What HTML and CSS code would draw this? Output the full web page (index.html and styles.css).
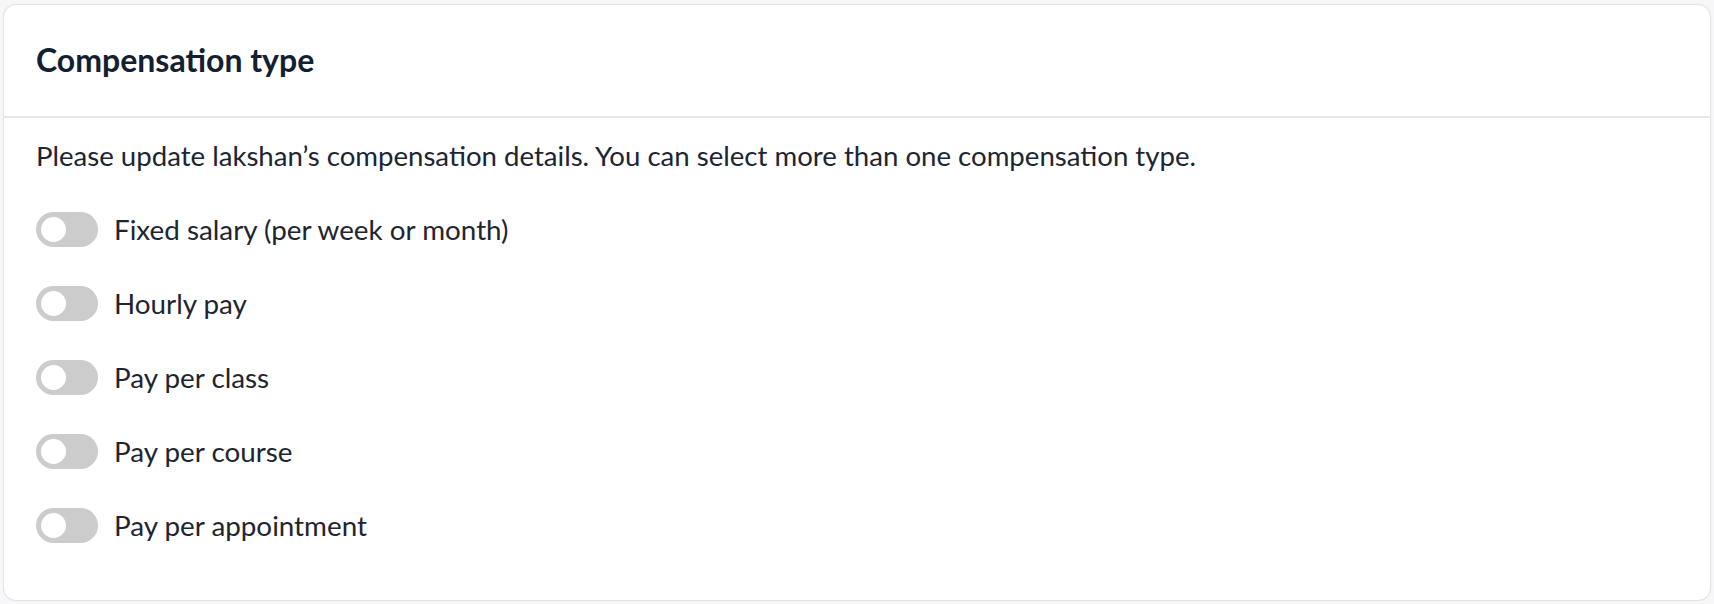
FILE: index.html
```html
<!DOCTYPE html>
<html>
<head>
<meta charset="utf-8">
<link rel="stylesheet" href="styles.css">
</head>
<body>
<div class="card">
  <div class="card-header">
    <h2 class="title">Compensation type</h2>
  </div>
  <div class="card-body">
    <p class="desc">Please update lakshan’s compensation details. You can select more than one compensation type.</p>
    <ul class="options">
      <li class="option"><span class="toggle"><span class="knob"></span></span><span class="label">Fixed salary (per week or month)</span></li>
      <li class="option"><span class="toggle"><span class="knob"></span></span><span class="label">Hourly pay</span></li>
      <li class="option"><span class="toggle"><span class="knob"></span></span><span class="label">Pay per class</span></li>
      <li class="option"><span class="toggle"><span class="knob"></span></span><span class="label">Pay per course</span></li>
      <li class="option"><span class="toggle"><span class="knob"></span></span><span class="label">Pay per appointment</span></li>
    </ul>
  </div>
</div>
</body>
</html>
```
FILE: styles.css
```css
html, body {
  margin: 0;
  background: #f7f7f9;
}
body {
  padding: 4px 3px 2px 3px;
  font-family: Lato, "Noto Sans", sans-serif;
  color: #1c2533;
}
.card {
  background: #ffffff;
  border: 1px solid #e3e3e8;
  border-radius: 13px;
  box-shadow: 0 0 2px rgba(0, 0, 0, 0.06);
  height: 597px;
  box-sizing: border-box;
}
.card-header {
  height: 113px;
  display: flex;
  align-items: center;
  padding-left: 32px;
  border-bottom: 2px solid #e8e8ec;
  box-sizing: border-box;
}
.title {
  margin: 0;
  font-size: 32px;
  font-weight: 700;
  color: #13202f;
  position: relative;
  top: -1px;
}
.card-body {
  padding: 22px 32px 0 32px;
}
.desc {
  margin: 0;
  font-size: 27.6px;
  line-height: 32px;
}
.options {
  list-style: none;
  margin: 40px 0 0 0;
  padding: 0;
  display: flex;
  flex-direction: column;
  gap: 40px;
}
.option {
  display: flex;
  align-items: center;
  gap: 16px;
  height: 34px;
}
.toggle {
  width: 62px;
  height: 35px;
  border-radius: 18px;
  background: #cccccc;
  display: flex;
  align-items: center;
  padding-left: 5px;
  box-sizing: border-box;
  flex: none;
}
.knob {
  width: 25px;
  height: 25px;
  border-radius: 50%;
  background: #ffffff;
}
.label {
  font-size: 27.8px;
  color: #1e2530;
}
```
